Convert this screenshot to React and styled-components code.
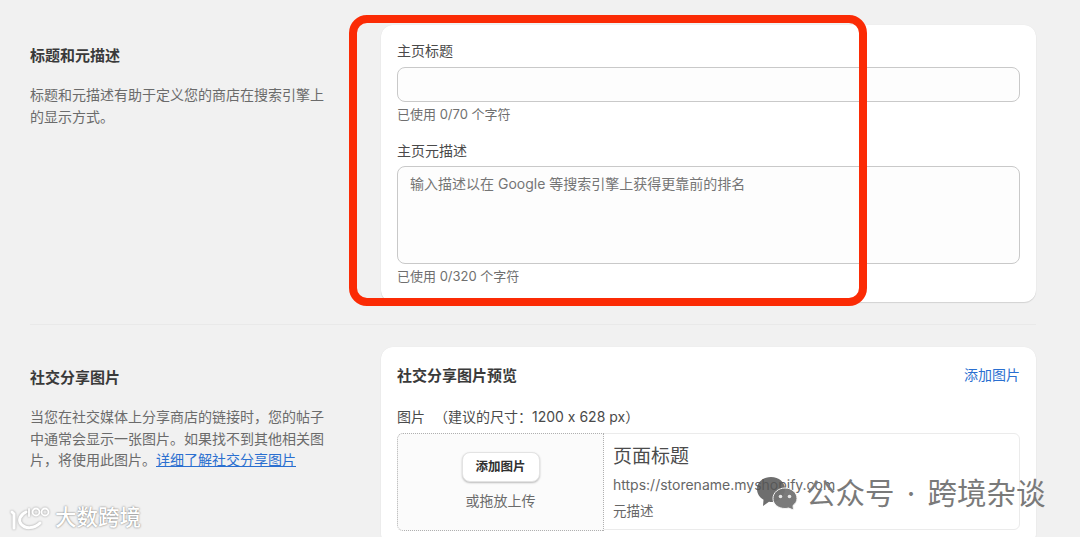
import React from 'react';
import styled, { createGlobalStyle } from 'styled-components';

const GlobalStyle = createGlobalStyle`
  html, body {
    margin: 0;
    padding: 0;
    background: #f1f1f1;
  }
  * {
    box-sizing: border-box;
  }
`;

function App() {
  return (
    <Main>
      <GlobalStyle />
      <Section>
        <Intro>
          <IntroTitle>标题和元描述</IntroTitle>
          <IntroText>标题和元描述有助于定义您的商店在搜索引擎上的显示方式。</IntroText>
        </Intro>
        <Card>
          <Field>
            <Label>主页标题</Label>
            <TextInput />
            <Helper>已使用 0/70 个字符</Helper>
          </Field>
          <Field>
            <Label>主页元描述</Label>
            <TextArea>输入描述以在 Google 等搜索引擎上获得更靠前的排名</TextArea>
            <Helper>已使用 0/320 个字符</Helper>
          </Field>
        </Card>
      </Section>
      <Divider />
      <Section>
        <Intro>
          <IntroTitle>社交分享图片</IntroTitle>
          <IntroText>
            当您在社交媒体上分享商店的链接时，您的帖子中通常会显示一张图片。如果找不到其他相关图片，将使用此图片。
            <TextLink>详细了解社交分享图片</TextLink>
          </IntroText>
        </Intro>
        <Card>
          <CardHeader>
            <CardTitle>社交分享图片预览</CardTitle>
            <AddLink>添加图片</AddLink>
          </CardHeader>
          <ImageLabel>
            <span>图片</span>
            <span>（建议的尺寸：1200 x 628 px）</span>
          </ImageLabel>
          <Preview>
            <DropZone>
              <AddButton>添加图片</AddButton>
              <DropHint>或拖放上传</DropHint>
            </DropZone>
            <PreviewText>
              <PreviewTitle>页面标题</PreviewTitle>
              <PreviewUrl>https://storename.myshopify.com</PreviewUrl>
              <PreviewDesc>元描述</PreviewDesc>
            </PreviewText>
          </Preview>
        </Card>
      </Section>

      <RedFrame />

      <LogoMark>
        <LogoIcon width="44" height="26" viewBox="0 0 44 26" fill="none" stroke="#fff" strokeLinecap="round">
          <path d="M4 8 L6 10 V24" strokeWidth="3" />
          <path d="M18 8 C12 11 10 16 13 20 C17 25 26 25 32 19" strokeWidth="3" />
          <path d="M21 5 V12" strokeWidth="1.800" />
          <circle cx="28" cy="8" r="3.500" strokeWidth="1.800" />
          <circle cx="37" cy="8" r="3.500" strokeWidth="1.800" />
        </LogoIcon>
        <LogoText>大数跨境</LogoText>
      </LogoMark>

      <WeChatMark>
        <svg width="42" height="34" viewBox="0 0 42 34">
          <path d="M15 1 C7 1 1 6.500 1 13 C1 17.500 3.500 21.500 7.500 23.700 L7 30 L13 25.800 C14 25.900 14.500 26 15.500 26 C23 26 29 20 29 13 C29 6.500 23 1 15 1 Z" fill="rgba(85, 85, 85, 0.85)" />
          <path d="M29 12 C22.500 12 17 16.500 17 22.500 C17 28.500 22.500 32.500 29 32.500 C30.500 32.500 31.500 32.300 32.500 32 L37.500 34 L37 29.500 C39.500 27.500 41 25.500 41 22.500 C41 16.500 35.500 12 29 12 Z" fill="rgba(115, 115, 115, 0.95)" stroke="#f4f4f4" strokeWidth="1" />
          <circle cx="24.500" cy="20.500" r="1.800" fill="#e6e6e6" />
          <circle cx="33.500" cy="20.500" r="1.800" fill="#e6e6e6" />
        </svg>
        <WeChatText>公众号 · 跨境杂谈</WeChatText>
      </WeChatMark>
    </Main>
  );
}

export default App;

const Main = styled.div`
  position: relative;
  width: 1080px;
  height: 537px;
  overflow: hidden;
  padding-top: 25px;
  background: #f1f1f1;
  color: #303030;
  font-family: "Inter", "Noto Sans CJK SC", sans-serif;
  font-size: 14px;
`;
const Section = styled.div`
  display: grid;
  grid-template-columns: 295px 655px;
  column-gap: 56px;
  padding-left: 30px;
`;
const Intro = styled.div`
  padding-top: 20px;
`;
const IntroTitle = styled.div`
  font-size: 15px;
  font-weight: 600;
  line-height: 22px;
  color: #3a3a3a;
`;
const IntroText = styled.div`
  margin-top: 17px;
  font-size: 14px;
  line-height: 21.500px;
  color: #6b6b6b;
`;
const TextLink = styled.span`
  color: #2a6fd0;
  text-decoration: underline;
`;
const Card = styled.div`
  background: #fff;
  border-radius: 12px;
  padding: 16px;
  box-shadow: 0 1px 1px rgba(0, 0, 0, 0.12), 0 0 1px rgba(0, 0, 0, 0.08);
`;
const Field = styled.div`
  & + & {
    margin-top: 17px;
  }
`;
const Label = styled.div`
  line-height: 20px;
  color: #4a4a4a;
  margin-bottom: 6px;
`;
const TextInput = styled.div`
  height: 35px;
  background: #fdfdfd;
  border: 1px solid #c9c9c9;
  border-radius: 8px;
`;
const TextArea = styled.div`
  height: 98px;
  margin-top: -1px;
  padding: 7px 12px;
  background: #fdfdfd;
  border: 1px solid #c9c9c9;
  border-radius: 8px;
  line-height: 20px;
  color: #757575;
`;
const Helper = styled.div`
  margin-top: 2px;
  font-size: 13px;
  line-height: 20px;
  color: #6f6f6f;
`;
const Divider = styled.div`
  height: 1px;
  margin: 22px 44px 22px 30px;
  background: #e9e9e9;
`;
const CardHeader = styled.div`
  display: flex;
  justify-content: space-between;
  align-items: center;
  height: 22px;
`;
const CardTitle = styled.div`
  font-size: 15px;
  font-weight: 600;
  color: #3a3a3a;
`;
const AddLink = styled.div`
  font-size: 14px;
  color: #2a6fd0;
`;
const ImageLabel = styled.div`
  display: flex;
  gap: 9px;
  margin-top: 22px;
  line-height: 20px;
  color: #4a4a4a;
`;
const Preview = styled.div`
  display: grid;
  grid-template-columns: 206px 1fr;
  height: 97px;
  margin-top: 6px;
  border: 1px solid #ebebeb;
  border-radius: 6px;
`;
const DropZone = styled.div`
  display: flex;
  flex-direction: column;
  align-items: center;
  padding-top: 18px;
  background: #fbfbfb;
  border: 1px dotted #b0b0b0;
  border-radius: 6px 0 0 6px;
  margin: -1px 0 -1px -1px;
`;
const AddButton = styled.div`
  width: 78px;
  height: 30px;
  border-radius: 8px;
  background: #fff;
  border: 1px solid #e3e3e3;
  box-shadow: 0 1px 2px rgba(0, 0, 0, 0.25);
  font-size: 12.500px;
  font-weight: 600;
  line-height: 28px;
  text-align: center;
  color: #303030;
`;
const DropHint = styled.div`
  margin-top: 9px;
  line-height: 20px;
  color: #6b6b6b;
`;
const PreviewText = styled.div`
  padding: 9px 9px;
`;
const PreviewTitle = styled.div`
  font-size: 19px;
  line-height: 28px;
  color: #4c4c4c;
`;
const PreviewUrl = styled.div`
  margin-top: 4px;
  font-size: 14px;
  line-height: 20px;
  color: #666;
`;
const PreviewDesc = styled.div`
  margin-top: 6px;
  font-size: 13.500px;
  line-height: 20px;
  color: #666;
`;
const RedFrame = styled.div`
  position: absolute;
  left: 349px;
  top: 15px;
  width: 518px;
  height: 291px;
  border: 8px solid #fb2b05;
  border-radius: 18px;
  pointer-events: none;
`;
const LogoMark = styled.div`
  position: absolute;
  left: 8px;
  top: 503px;
  display: flex;
  align-items: center;
  gap: 3px;
`;
const LogoIcon = styled.svg`
  filter: drop-shadow(0 0 1px rgba(0, 0, 0, 0.35));
`;
const LogoText = styled.div`
  font-size: 21.500px;
  line-height: 28px;
  font-weight: 500;
  color: #fff;
  text-shadow: 0 0 2px rgba(0, 0, 0, 0.6);
`;
const WeChatMark = styled.div`
  position: absolute;
  left: 756px;
  top: 476px;
  display: flex;
  align-items: center;
  gap: 8px;
`;
const WeChatText = styled.div`
  font-size: 29.500px;
  line-height: 34px;
  word-spacing: 4px;
  white-space: nowrap;
  color: #7a7a7a;
`;
